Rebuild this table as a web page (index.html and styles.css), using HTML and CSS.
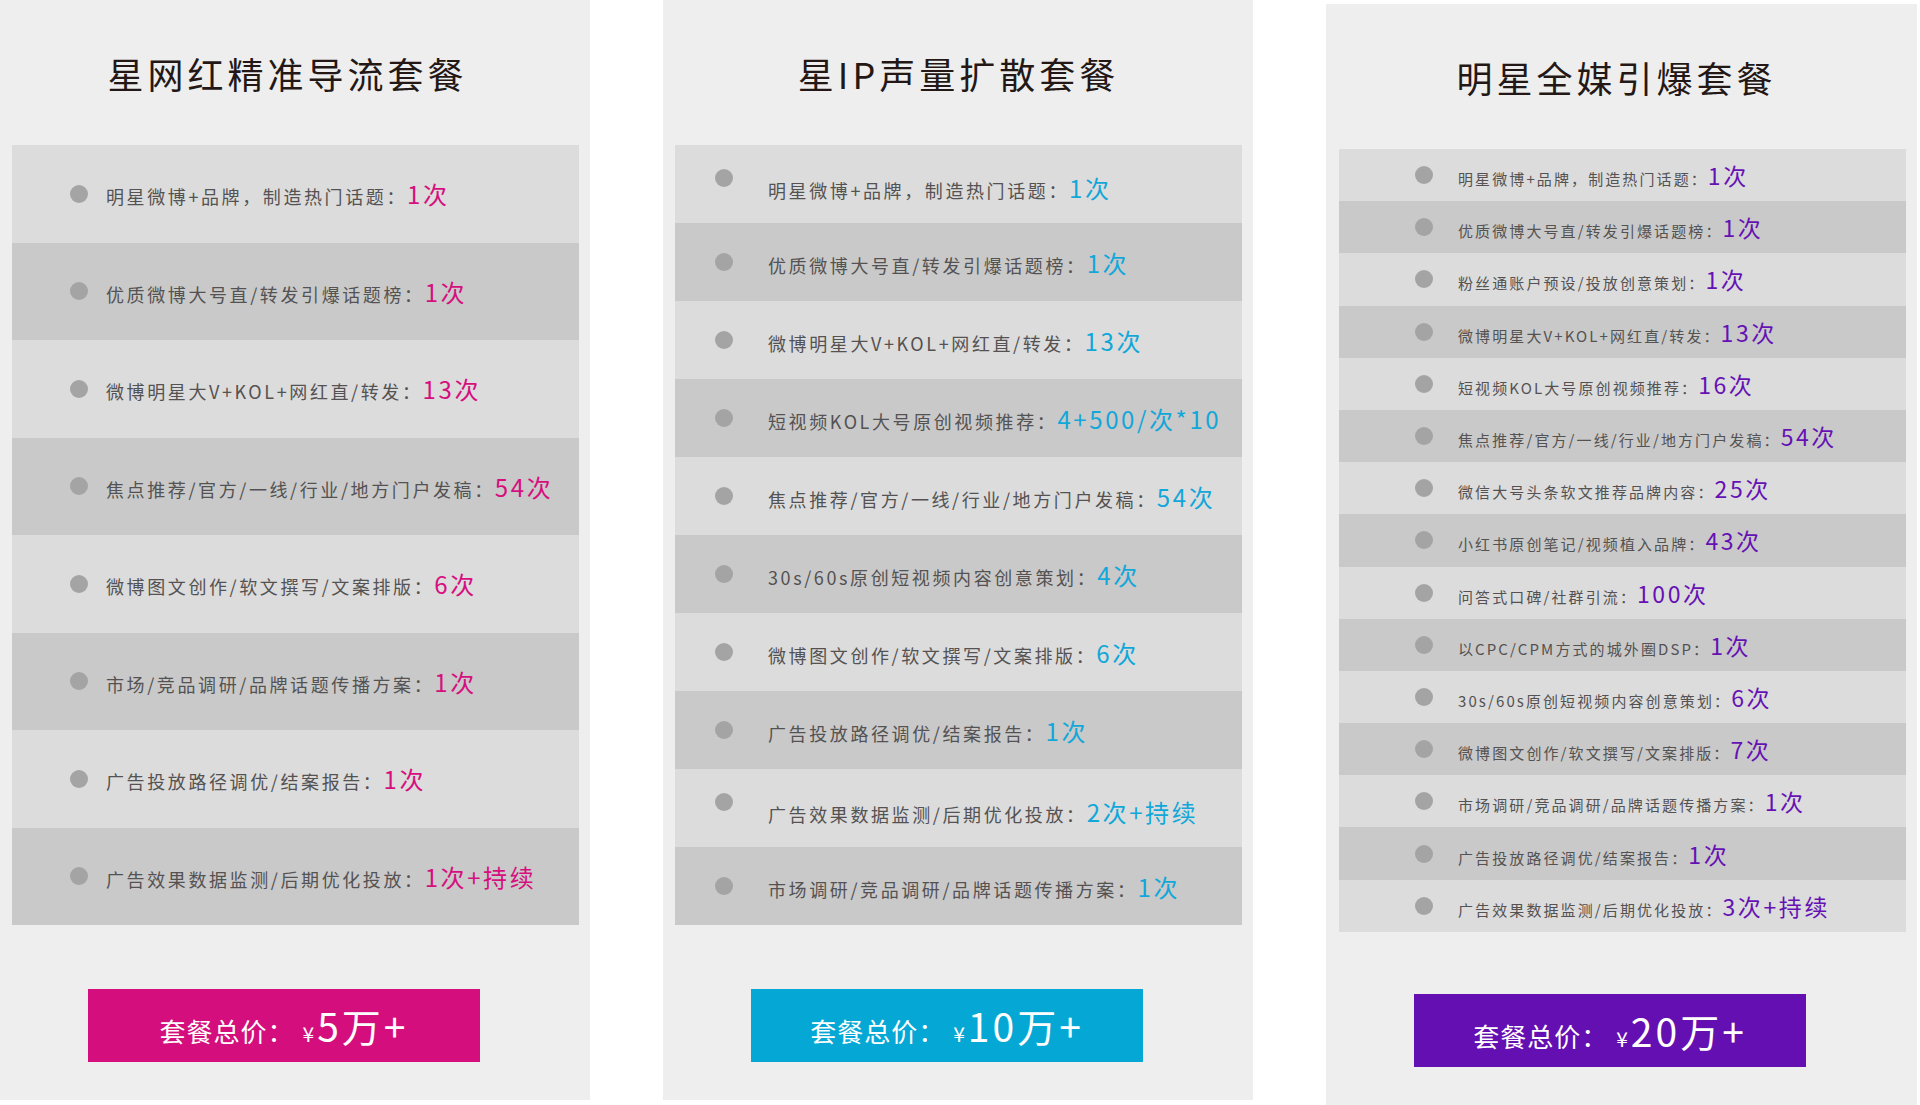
FILE: index.html
```html
<!DOCTYPE html>
<html lang="zh-CN">
<head>
	<meta charset="UTF-8">
	<title>套餐价格</title>
	<link rel="stylesheet" href="styles.css">
</head>
<body>
	<div class="wrap">
		<!-- 套餐一 -->
		<div class="pack pink big">
			<h2>星网红精准导流套餐</h2>
			<ul>
				<li><i></i><p>明星微博+品牌，制造热门话题：<em>1次</em></p></li>
				<li><i></i><p>优质微博大号直/转发引爆话题榜：<em>1次</em></p></li>
				<li><i></i><p>微博明星大V+KOL+网红直/转发：<em>13次</em></p></li>
				<li><i></i><p>焦点推荐/官方/一线/行业/地方门户发稿：<em>54次</em></p></li>
				<li><i></i><p>微博图文创作/软文撰写/文案排版：<em>6次</em></p></li>
				<li><i></i><p>市场/竞品调研/品牌话题传播方案：<em>1次</em></p></li>
				<li><i></i><p>广告投放路径调优/结案报告：<em>1次</em></p></li>
				<li><i></i><p>广告效果数据监测/后期优化投放：<em>1次+持续</em></p></li>
			</ul>
			<div class="price">套餐总价：<span class="yen">¥</span><strong>5万+</strong></div>
		</div>
		<!-- 套餐二 -->
		<div class="pack blue mid">
			<h2>星IP声量扩散套餐</h2>
			<ul>
				<li class="up"><i></i><p>明星微博+品牌，制造热门话题：<em>1次</em></p></li>
				<li><i></i><p>优质微博大号直/转发引爆话题榜：<em>1次</em></p></li>
				<li><i></i><p>微博明星大V+KOL+网红直/转发：<em>13次</em></p></li>
				<li><i></i><p>短视频KOL大号原创视频推荐：<em>4+500/次*10</em></p></li>
				<li><i></i><p>焦点推荐/官方/一线/行业/地方门户发稿：<em>54次</em></p></li>
				<li><i></i><p>30s/60s原创短视频内容创意策划：<em>4次</em></p></li>
				<li><i></i><p>微博图文创作/软文撰写/文案排版：<em>6次</em></p></li>
				<li><i></i><p>广告投放路径调优/结案报告：<em>1次</em></p></li>
				<li class="up"><i></i><p>广告效果数据监测/后期优化投放：<em>2次+持续</em></p></li>
				<li><i></i><p>市场调研/竞品调研/品牌话题传播方案：<em>1次</em></p></li>
			</ul>
			<div class="price">套餐总价：<span class="yen">¥</span><strong>10万+</strong></div>
		</div>
		<!-- 套餐三 -->
		<div class="pack purple small">
			<h2>明星全媒引爆套餐</h2>
			<ul>
				<li><i></i><p>明星微博+品牌，制造热门话题：<em>1次</em></p></li>
				<li><i></i><p>优质微博大号直/转发引爆话题榜：<em>1次</em></p></li>
				<li><i></i><p>粉丝通账户预设/投放创意策划：<em>1次</em></p></li>
				<li><i></i><p>微博明星大V+KOL+网红直/转发：<em>13次</em></p></li>
				<li><i></i><p>短视频KOL大号原创视频推荐：<em>16次</em></p></li>
				<li><i></i><p>焦点推荐/官方/一线/行业/地方门户发稿：<em>54次</em></p></li>
				<li><i></i><p>微信大号头条软文推荐品牌内容：<em>25次</em></p></li>
				<li><i></i><p>小红书原创笔记/视频植入品牌：<em>43次</em></p></li>
				<li><i></i><p>问答式口碑/社群引流：<em>100次</em></p></li>
				<li><i></i><p>以CPC/CPM方式的城外圈DSP：<em>1次</em></p></li>
				<li><i></i><p>30s/60s原创短视频内容创意策划：<em>6次</em></p></li>
				<li><i></i><p>微博图文创作/软文撰写/文案排版：<em>7次</em></p></li>
				<li><i></i><p>市场调研/竞品调研/品牌话题传播方案：<em>1次</em></p></li>
				<li><i></i><p>广告投放路径调优/结案报告：<em>1次</em></p></li>
				<li><i></i><p>广告效果数据监测/后期优化投放：<em>3次+持续</em></p></li>
			</ul>
			<div class="price">套餐总价：<span class="yen">¥</span><strong>20万+</strong></div>
		</div>
	</div>
</body>
</html>
```

FILE: styles.css
```css
body,ul,p,h2{margin: 0;padding: 0;}
body{background: #fff;font-family: "Noto Sans CJK SC", "Liberation Sans", sans-serif;height: 1105px;overflow: hidden;}
li{list-style: none;}
em{font-style: normal;}

.wrap{display: flex;column-gap: 73px;align-items: flex-start;}

.pack{width: 590px;height: 1100px;box-sizing: border-box;padding: 0 11px 38px 12px;background: #eee;display: flex;flex-direction: column;}
.pack h2{margin: 55px 0 54px;height: 36px;line-height: 36px;font-size: 36px;font-weight: 400;letter-spacing: 4px;text-align: center;color: #231815;}
.pack ul{display: flex;flex-direction: column;}
.pack li{display: flex;align-items: center;background: #dcdcdc;}
.pack li:nth-child(even){background: #c9c9c9;}
.pack li i{flex: none;width: 18px;height: 18px;border-radius: 50%;background: #a4a4a4;}
.pack li p{font-size: 18px;letter-spacing: 2.6px;color: #545252;white-space: nowrap;}
.pack li em{font-size: 24px;letter-spacing: 2.6px;}

.price{margin: auto 0 0 76px;width: 392px;height: 73px;line-height: 73px;text-align: center;color: #fff;font-size: 26px;letter-spacing: 1px;white-space: nowrap;}
.price .yen{font-size: 21px;margin-left: 8px;}
.price strong{font-size: 39px;font-weight: 400;letter-spacing: 3px;margin-left: 2px;}

/* 套餐一 */
.pink h2{padding-right: 16px;}
.big li{height: 97.5px;padding-left: 58px;}
.big li i{margin-right: 18px;}
.pink li em{color: #d60f7e;}
.pink .price{background: #d40e7c;}

/* 套餐二 */
.mid li{height: 78px;padding-left: 40px;}
.mid li i{margin-right: 35px;}
.mid li.up i{margin-bottom: 12px;}
.mid li.up p{margin-top: 6px;}
.blue li em{color: #12a7d9;}
.blue .price{background: #05a8d5;}

/* 套餐三 */
.small{width: 591px;height: 1101px;margin-top: 4px;padding-left: 13px;}
.purple h2{padding-right: 12px;}
.small li{height: 52.2px;padding-left: 76px;}
.small li i{margin-right: 25px;}
.small li p{font-size: 15px;letter-spacing: 2.1px;}
.small li em{font-size: 23px;letter-spacing: 2.6px;}
.purple li em{color: #6511b4;}
.purple .price{background: #640fb2;margin-left: 75px;}
```
